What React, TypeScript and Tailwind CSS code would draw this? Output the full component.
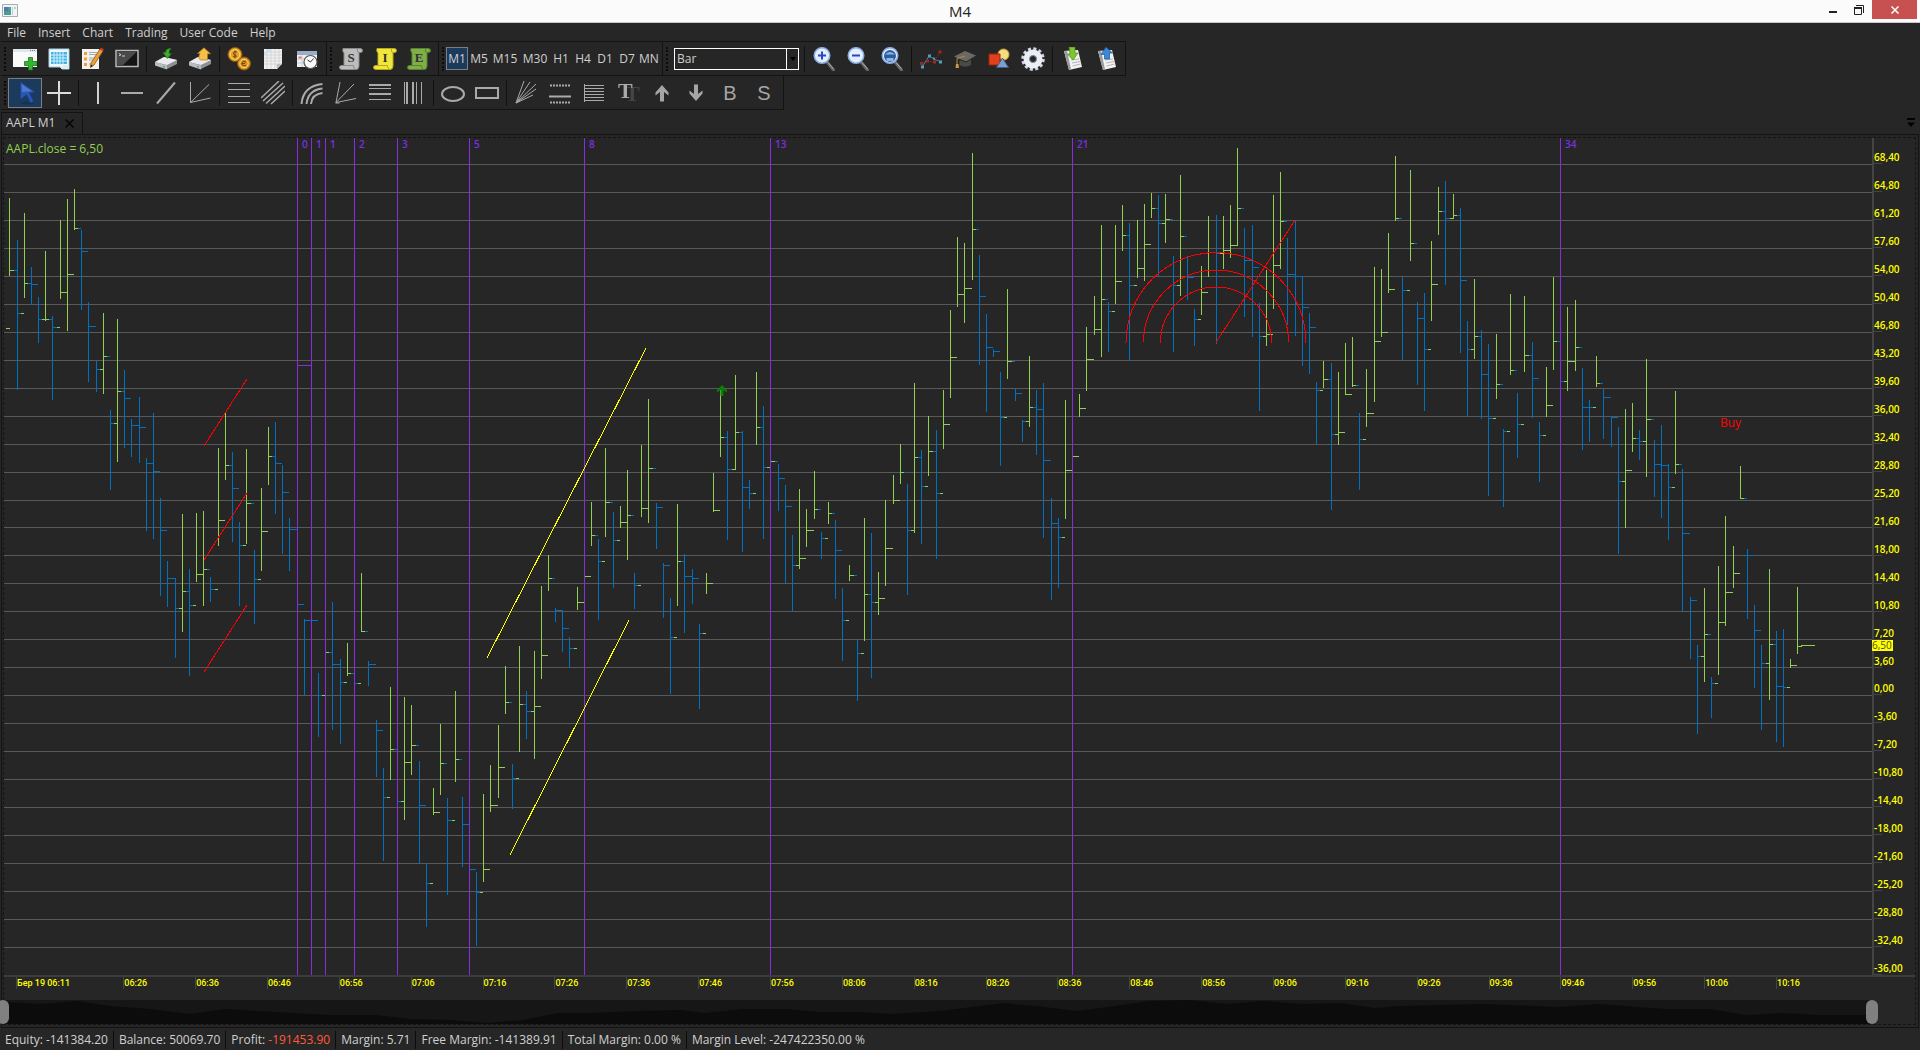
import { ReactNode, useState } from "react";

type Bar = [high: number, low: number, close: number, up: 0 | 1];

// high, low and close of every minute in chart units, 1 = closed up
const bars: Bar[] = [
  [198, 275, 270, 1], [240, 389, 313, 0], [213, 297, 283, 1], [267, 304, 284, 0], [297, 342, 319, 0],
  [251, 320, 319, 1], [316, 399, 327, 0], [220, 298, 292, 1], [199, 330, 274, 1], [189, 229, 228, 1],
  [230, 309, 251, 0], [302, 381, 326, 0], [361, 391, 369, 0], [313, 393, 356, 1], [410, 489, 423, 0],
  [319, 461, 391, 1], [370, 447, 398, 0], [419, 456, 425, 0], [397, 462, 427, 0], [458, 530, 463, 0],
  [413, 538, 471, 0], [498, 595, 530, 0], [561, 606, 578, 0], [578, 657, 608, 0], [514, 631, 591, 1],
  [569, 675, 605, 0], [513, 581, 574, 1], [511, 605, 569, 1], [577, 601, 589, 0], [448, 545, 520, 1],
  [413, 479, 465, 1], [452, 541, 488, 0], [522, 605, 545, 0], [449, 543, 503, 1], [550, 623, 579, 0],
  [488, 570, 531, 1], [427, 484, 456, 1], [422, 513, 463, 0], [465, 553, 492, 0], [518, 570, 529, 0],
  [529, 604, 604, 0], [619, 694, 620, 0], [620, 640, 620, 0], [673, 736, 695, 0], [652, 695, 652, 1],
  [602, 729, 664, 0], [659, 743, 682, 0], [643, 675, 673, 1], [673, 683, 683, 0], [573, 631, 631, 1],
  [661, 685, 664, 0], [720, 776, 730, 0], [768, 860, 797, 0], [687, 779, 749, 1], [749, 801, 801, 0],
  [697, 819, 762, 1], [705, 774, 745, 1], [761, 863, 805, 0], [863, 926, 883, 0], [788, 814, 812, 1],
  [724, 794, 763, 1], [798, 894, 820, 0], [691, 781, 759, 1], [797, 866, 824, 0], [824, 869, 869, 0],
  [872, 945, 892, 0], [794, 881, 869, 1], [765, 811, 805, 1], [725, 797, 767, 1], [666, 713, 702, 1],
  [764, 808, 778, 0], [646, 751, 704, 1], [691, 738, 711, 0], [651, 758, 706, 1], [586, 678, 655, 1],
  [555, 590, 578, 1], [608, 621, 610, 0], [610, 651, 628, 0], [637, 666, 648, 0], [587, 609, 602, 1],
  [576, 602, 576, 1], [502, 545, 535, 1], [539, 619, 561, 0], [448, 536, 502, 1], [512, 587, 540, 0],
  [506, 527, 522, 1], [470, 559, 515, 1], [573, 608, 585, 0], [445, 516, 508, 1], [399, 522, 468, 1],
  [503, 548, 507, 0], [563, 617, 565, 0], [598, 693, 637, 0], [504, 605, 561, 1], [554, 632, 576, 0],
  [569, 603, 578, 0], [624, 708, 633, 0], [573, 593, 583, 1], [473, 511, 510, 1], [390, 456, 437, 1],
  [431, 539, 469, 0], [375, 469, 432, 1], [431, 551, 487, 0], [480, 508, 493, 0], [372, 444, 427, 1],
  [406, 538, 467, 0], [461, 467, 461, 1], [464, 510, 478, 0], [485, 582, 506, 0], [535, 610, 565, 0],
  [489, 568, 558, 1], [509, 546, 530, 1], [471, 518, 509, 1], [532, 558, 538, 0], [502, 523, 513, 1],
  [520, 598, 550, 0], [588, 660, 620, 0], [565, 580, 575, 1], [639, 700, 653, 0], [518, 640, 594, 1],
  [533, 677, 602, 0], [572, 614, 598, 1], [500, 585, 548, 1], [475, 503, 500, 1], [444, 483, 472, 1],
  [484, 594, 530, 0], [383, 532, 457, 1], [450, 543, 486, 0], [416, 475, 451, 1], [430, 558, 493, 0],
  [390, 448, 424, 1], [310, 397, 357, 1], [237, 306, 294, 1], [243, 322, 288, 1], [153, 279, 229, 1],
  [255, 364, 296, 0], [314, 411, 347, 0], [349, 356, 351, 0], [372, 465, 417, 0], [289, 378, 361, 1],
  [388, 400, 393, 0], [420, 441, 421, 0], [356, 426, 407, 1], [390, 454, 409, 0], [383, 537, 460, 0],
  [498, 599, 523, 0], [518, 587, 537, 0], [400, 518, 470, 1], [456, 470, 456, 1], [394, 416, 408, 1],
  [327, 390, 359, 1], [296, 334, 329, 1], [225, 356, 299, 1], [302, 351, 311, 0], [225, 303, 281, 1],
  [205, 250, 235, 1], [223, 359, 285, 0], [220, 277, 268, 1], [204, 280, 244, 1], [193, 217, 208, 1],
  [195, 276, 223, 0], [194, 242, 219, 1], [256, 351, 285, 0], [175, 295, 236, 1], [256, 299, 277, 0],
  [309, 345, 319, 0], [266, 314, 292, 1], [216, 276, 252, 1], [215, 343, 253, 0], [216, 268, 250, 1],
  [205, 257, 245, 1], [148, 245, 208, 1], [228, 316, 260, 0], [225, 336, 267, 0], [303, 410, 336, 0],
  [270, 345, 334, 1], [195, 308, 265, 1], [172, 268, 221, 1], [238, 324, 274, 0], [221, 335, 276, 0],
  [276, 365, 307, 0], [313, 373, 327, 0], [382, 443, 390, 0], [361, 387, 379, 1], [363, 509, 434, 0],
  [372, 444, 432, 1], [343, 394, 394, 1], [337, 386, 385, 1], [413, 489, 439, 0], [369, 426, 413, 1],
  [267, 401, 341, 1], [269, 336, 332, 1], [233, 292, 289, 1], [156, 220, 218, 1], [277, 359, 290, 0],
  [170, 260, 243, 1], [302, 384, 318, 0], [293, 410, 349, 0], [241, 320, 284, 1], [187, 234, 211, 1],
  [181, 284, 218, 0], [194, 218, 215, 1], [208, 352, 280, 0], [321, 416, 349, 0], [279, 358, 336, 1],
  [330, 418, 374, 0], [344, 495, 418, 0], [334, 398, 384, 1], [429, 506, 431, 0], [294, 374, 370, 1],
  [393, 457, 424, 0], [296, 371, 355, 1], [342, 417, 378, 0], [422, 481, 435, 0], [367, 416, 405, 1],
  [277, 369, 341, 1], [341, 381, 381, 0], [307, 390, 361, 1], [300, 370, 347, 1], [368, 449, 407, 0],
  [400, 441, 407, 0], [356, 386, 383, 1], [389, 438, 397, 0], [416, 446, 417, 0], [427, 553, 481, 0],
  [409, 527, 470, 1], [403, 451, 438, 1], [430, 459, 441, 0], [359, 476, 419, 1], [440, 496, 464, 0],
  [425, 517, 465, 0], [464, 539, 487, 0], [391, 473, 464, 1], [469, 611, 533, 0], [597, 658, 600, 0],
  [645, 733, 656, 0], [588, 681, 634, 1], [677, 717, 683, 0], [566, 674, 622, 1], [516, 625, 592, 1],
  [546, 587, 573, 1], [466, 498, 498, 1], [549, 618, 555, 0], [605, 687, 630, 0], [645, 729, 663, 0],
  [569, 699, 644, 1], [631, 741, 686, 0], [629, 746, 687, 0], [659, 667, 665, 1], [587, 653, 646, 1],
];

const barX = (i: number) => Math.floor(9.9 + 7.18 * i);

const fibLines = [
  { x: 297, label: "0" },
  { x: 311, label: "1" },
  { x: 325, label: "1" },
  { x: 354, label: "2" },
  { x: 397, label: "3" },
  { x: 469, label: "5" },
  { x: 584, label: "8" },
  { x: 770, label: "13" },
  { x: 1072, label: "21" },
  { x: 1560, label: "34" },
];

const prices = Array.from({ length: 30 }, (_, i) =>
  (68.4 - i * 3.6).toFixed(2).replace("-0.00", "0.00").replace(".", ",")
);

const times = [
  { text: "Бер 19 06:11", span: 15 },
  ...Array.from({ length: 24 }, (_, i) => {
    const min = 386 + i * 10;
    const hh = String(Math.floor(min / 60)).padStart(2, "0");
    const mm = String(min % 60).padStart(2, "0");
    return { text: `${hh}:${mm}`, span: i === 23 ? 13.4 : 10 };
  }),
];

const overview =
  "0,2 36,4 73,1 106,6 146,9 186,14 221,9 256,11 326,15 371,15 406,19 446,20 483,23 519,20 554,13 586,13 636,11 676,10 701,13 739,9 783,9 816,12 856,12 886,14 936,11 1000,3 1040,7 1074,11 1110,6 1146,1 1186,0 1223,4 1259,1 1299,4 1336,3 1371,8 1396,6 1480,4 1556,7 1594,4 1661,9 1706,9 1743,15 1779,13 1816,15 1868,15";

const Icon = ({ children }: { children: ReactNode }) => (
  <svg viewBox="0 0 24 24" className="h-6 w-6" aria-hidden="true">
    {children}
  </svg>
);

const Scroll = ({ fill, edge, letter }: { fill: string; edge: string; letter: string }) => (
  <Icon>
    <path d="M4 1.500h17q2.500 0 2.500 2t-2 2H20V19q0 3.500-3 3.500H3q-2.500 0-2.500-2t2-2H5V6Q3 4 4 1.500z" fill={fill} stroke={edge} strokeWidth="1" />
    <path d="M18.500 2v2q0 1.500 1.500 1.500M3 18.500h11.500q0 3 2 4" fill="none" stroke={edge} strokeWidth="1" />
    <text x="12" y="15" textAnchor="middle" className="font-['Liberation_Serif'] text-[13px] font-bold" fill="#333333">
      {letter}
    </text>
  </Icon>
);

const Drive = ({ children }: { children: ReactNode }) => (
  <Icon>
    <path d="M1 15l9-5 13 3v4l-10 5-12-4z" fill="#8d9096" />
    <path d="M1 15l9-5 13 3-10 5z" fill="#e9ebee" />
    <path d="M1 15l12 3.500v4L1 18.500z" fill="#b9bcc2" />
    <path d="M9 19.500l2 .6" stroke="#4caf50" strokeWidth="1.500" />
    {children}
  </Icon>
);

const Lens = ({ children }: { children: ReactNode }) => (
  <Icon>
    <path d="M15.500 15.500l6 7.500" stroke="#666666" strokeWidth="3" strokeLinecap="round" />
    <path d="M16 15.500l5.500 6.500" stroke="#aaaaaa" strokeWidth="1" />
    <circle cx="10" cy="8.500" r="7.800" fill="#e3edfc" stroke="#86abe2" strokeWidth="1.500" />
    {children}
  </Icon>
);

const Note = ({ children }: { children: ReactNode }) => (
  <Icon>
    <path d="M4 4l14-1 4 17-13 3z" fill="#f2f2f2" />
    <path d="M4 4l3-.3 4 18.500-2 .8z" fill="#9a9a9a" />
    <path d="M11 13l8-1M12 16l8-1.500M12.500 19l8-2" stroke="#b5b5b5" strokeWidth="1" />
    {children}
  </Icon>
);

const Lines = ({ d, width = 1 }: { d: string; width?: number }) => (
  <Icon>
    <path d={d} fill="none" stroke="#aaaaaa" strokeWidth={width} />
  </Icon>
);

type Tool = { name: string; icon: ReactNode } | null;

const fileTools: Tool[] = [
  {
    name: "New chart",
    icon: (
      <Icon>
        <path d="M0 2h24v18H0z" fill="#fafafa" />
        <path d="M0 2h24v3H0z" fill="#dfe6ee" />
        <path d="M17 3.500h1M19 3.500h1M21 3.500h1" stroke="#5b7fae" />
        <path d="M15.500 10.500h4v4h4.500v4h-4.500V23h-4v-4.500H11.500v-4h4z" fill="#35b535" stroke="#157a15" strokeWidth=".8" />
      </Icon>
    ),
  },
  {
    name: "Calendar",
    icon: (
      <Icon>
        <path d="M2 2h20v20h-7l-2-2H2z" fill="#f3f7fa" stroke="#9fd3ea" />
        <path d="M4 5h16v12H4z" fill="#3cb4e7" />
        <path d="M4 8h16M4 11h16M4 14h16M7 5v12M10 5v12M13 5v12M16 5v12" stroke="#d5f0fb" />
        <path d="M14 22l1-3.500 7-.5v4z" fill="#dceef5" />
      </Icon>
    ),
  },
  {
    name: "Edit list",
    icon: (
      <Icon>
        <path d="M1 2h17v20H1z" fill="#f4f2ee" />
        <path d="M3 5h3v3H3zM3 10.500h3v3H3zM3 16h3v3H3z" fill="#f39a3d" />
        <path d="M8 5.500h8M8 7.500h8M8 11h7M8 13h5M8 17h6" stroke="#a9a9a9" />
        <path d="M19 2l3 2-9 14-3.500 2.500.5-4.500z" fill="#e9a13b" stroke="#8c5a16" strokeWidth=".8" />
        <path d="M19 2l1-1.500 3 2L22 4z" fill="#c33" />
        <path d="M9.500 20.500l.4-3 2 1.500z" fill="#222" />
      </Icon>
    ),
  },
  {
    name: "Terminal",
    icon: (
      <Icon>
        <path d="M1 3.500h22v16H1z" fill="#151515" stroke="#b9b9b9" strokeWidth="1.500" />
        <path d="M2 4.500h20L8 18H2z" fill="#4a4a4a" />
        <path d="M4 6.500l2 1.200-2 1.200M7 9h3" stroke="#eee" fill="none" strokeWidth=".8" />
      </Icon>
    ),
  },
  null,
  {
    name: "Import data",
    icon: (
      <Drive>
        <path d="M17 1.500Q12 1 11.500 5.500H9l4.500 6 4-5H15Q15 3 17 1.500z" fill="#3fae29" stroke="#1f7a12" strokeWidth=".6" />
      </Drive>
    ),
  },
  {
    name: "Export data",
    icon: (
      <Drive>
        <path d="M16 .8l6.500 6h-3V13h-7q-2-1-1.500-4l1-2.500h-2.500z" fill="#f6bf4b" stroke="#b97a15" strokeWidth=".7" />
      </Drive>
    ),
  },
  null,
  {
    name: "Account",
    icon: (
      <Icon>
        <circle cx="8" cy="7.500" r="7" fill="#e2a028" stroke="#8d560c" />
        <circle cx="8" cy="7.500" r="4.800" fill="none" stroke="#fbdc7c" />
        <path d="M10 5Q7 3.500 6.500 5.800T9.500 9Q9 11 6 9.500M8 3.500v8" fill="none" stroke="#7a4708" />
        <circle cx="17" cy="16.500" r="6.500" fill="#d8921f" stroke="#8d560c" />
        <circle cx="17" cy="16.500" r="4.200" fill="none" stroke="#fbdc7c" />
        <path d="M19 15q-3-2-4 1t4 2.500M15 16.500h3" fill="none" stroke="#7a4708" />
      </Icon>
    ),
  },
  {
    name: "Report",
    icon: (
      <Icon>
        <path d="M3 2h18v15l-5 5H3z" fill="#f1f1f1" />
        <path d="M3 5h18M3 8h18M3 11h18M3 14h18M3 17h14M6 2v20M10 2v20M14 2v20M18 2v15" stroke="#cfd0d2" strokeWidth=".8" />
        <path d="M21 16l-5 6-.5-4.500z" fill="#bdbdbd" />
        <path d="M6 2h4v3H6zM3 5h3v3H3z" fill="#cfe0f5" />
      </Icon>
    ),
  },
  {
    name: "Schedule",
    icon: (
      <Icon>
        <path d="M2 4h20v16H2z" fill="#eef0f3" />
        <path d="M2 4h20v4H2z" fill="#9badc9" />
        <path d="M2 12h20M2 16h20M7 8v12M12 8v12M17 8v12" stroke="#c8ccd4" />
        <path d="M3.500 9.500h3v2h-3z" fill="#e57373" />
        <circle cx="15.500" cy="15" r="6.500" fill="#fafafa" stroke="#555555" strokeWidth="1.200" />
        <path d="M15.500 15l3-3.500M15.500 15l-3-2" stroke="#333" fill="none" />
      </Icon>
    ),
  },
];

const scriptTools: Tool[] = [
  { name: "Scripts", icon: <Scroll fill="#bdbdbd" edge="#8a8a8a" letter="S" /> },
  { name: "Indicators", icon: <Scroll fill="#f0e63c" edge="#b5a91c" letter="I" /> },
  { name: "Experts", icon: <Scroll fill="#7fae4a" edge="#55842a" letter="E" /> },
];

const viewTools: Tool[] = [
  null,
  {
    name: "Zoom in",
    icon: (
      <Lens>
        <path d="M10 4.500v8M6 8.500h8" stroke="#2449c4" strokeWidth="2" />
      </Lens>
    ),
  },
  {
    name: "Zoom out",
    icon: (
      <Lens>
        <path d="M6 8.500h8" stroke="#2449c4" strokeWidth="2" />
      </Lens>
    ),
  },
  {
    name: "Zoom to fit",
    icon: (
      <Lens>
        <circle cx="10" cy="9" r="6" fill="#2c5d9c" />
        <path d="M5 7.500q5-5 10 0zM6.500 11h7v3h-7z" fill="#8fb6e4" />
      </Lens>
    ),
  },
  null,
  {
    name: "Lines",
    icon: (
      <Icon>
        <path d="M2 17l7-3 6 1 6-10" stroke="#8e2020" fill="none" strokeDasharray="2 1" />
        <path d="M3 20l7-11 5 3 7 3" stroke="#3d89a8" fill="none" />
        <path d="M2 18.500h3v3H2zM9 7.500h3v3H9zM20 13.500h3v3h-3zM14 10.500h2v2h-2z" fill="#4fa0c0" />
        <path d="M1 15h3v3H1zM7 12.500h3v3H7zM19.500 3.500h3v3h-3zM14 13.500h3v3h-3z" fill="#a02525" />
      </Icon>
    ),
  },
  {
    name: "Tutorial",
    icon: (
      <Icon>
        <path d="M1 9.500L12 4l11 4.500-10 6z" fill="#6a6a64" />
        <path d="M6.500 13v5q5.500 3.500 11.500 0v-5.500l-5 3z" fill="#4b4b46" />
        <path d="M12 9l-8 2.500V19" stroke="#b98a35" fill="none" />
        <path d="M3 17h2.500l.5 4H2.500z" fill="#c89a3f" />
      </Icon>
    ),
  },
  {
    name: "Objects",
    icon: (
      <Icon>
        <circle cx="16.500" cy="7.500" r="5.500" fill="#f5dc7d" stroke="#c4a33f" />
        <path d="M2 7h11v11H2z" fill="#e2401c" stroke="#9c2408" />
        <path d="M15.500 11l6 9.500h-12z" fill="#7f9fca" stroke="#405d8c" />
      </Icon>
    ),
  },
  {
    name: "Settings",
    icon: (
      <Icon>
        <circle cx="12" cy="12" r="10" fill="none" stroke="#d4d4e4" strokeWidth="3.500" strokeDasharray="3 2.236" />
        <circle cx="12" cy="12" r="6.500" fill="none" stroke="#eceef6" strokeWidth="6" />
        <circle cx="12" cy="12" r="3.500" fill="#262626" stroke="#8d93ad" />
      </Icon>
    ),
  },
  null,
  {
    name: "Save template",
    icon: (
      <Note>
        <path d="M9 0h6v6h3l-5 7-5.500-6H10z" fill="#7cc62f" stroke="#4b8a12" strokeWidth=".7" />
      </Note>
    ),
  },
  {
    name: "Load template",
    icon: (
      <Note>
        <path d="M12 0l6.500 6h-3v6h-5V7.500H7z" fill="#3b87d8" stroke="#1c559b" strokeWidth=".7" />
      </Note>
    ),
  },
];

const drawTools: Tool[] = [
  {
    name: "Select",
    icon: (
      <Icon>
        <ellipse cx="14" cy="22" rx="7" ry="1.200" fill="#16304d" />
        <path d="M7.500 1L22 11l-5.500 1 4 8.500-3 1.500-4-8.500-6 5z" fill="#2b57b5" stroke="#1e3f8c" strokeWidth=".8" />
        <path d="M8.500 3L19 10.300 9 11z" fill="#4f78c9" />
      </Icon>
    ),
  },
  {
    name: "Crosshair",
    icon: (
      <Icon>
        <path d="M12 0v24M0 12h24" stroke="#dcdcdc" strokeWidth="2" />
      </Icon>
    ),
  },
  null,
  {
    name: "Vertical line",
    icon: (
      <Icon>
        <path d="M12 1v22" stroke="#d0d0d0" strokeWidth="2" />
      </Icon>
    ),
  },
  { name: "Horizontal line", icon: <Lines d="M1 12h22" width={2} /> },
  { name: "Trend line", icon: <Lines d="M3 22.500L21 1.500" width={2} /> },
  { name: "Angle", icon: <Lines d="M2.500 1v20.500L21 3.500M2.500 21.500L22.500 17" /> },
  null,
  { name: "Fibonacci retracement", icon: <Lines d="M1 2.500h22M1 8.500h22M1 15.500h22M1 21.500h22" /> },
  {
    name: "Fibonacci channel",
    icon: (
      <Icon>
        <path d="M0 17L18 0M2 20L22 2M5 22.500L24 5M10 23L24 10" stroke="#aaaaaa" strokeWidth="1.500" />
      </Icon>
    ),
  },
  null,
  {
    name: "Fibonacci arcs",
    icon: <Lines d="M1.500 23Q3 5 22.500 3M6.500 23Q8 9 22.500 7.500M11 23Q12 13 22.500 12" width={2} />,
  },
  { name: "Fibonacci fan", icon: <Lines d="M6 1L2 21.500 20 3M2 21.500L22 17.500M1.500 22h4" /> },
  {
    name: "Fibonacci levels",
    icon: (
      <Icon>
        <path d="M1 4h22M1 13h22" stroke="#aaaaaa" strokeWidth="2" />
        <path d="M1 7.500h22M1 18.500h22" stroke="#aaaaaa" />
      </Icon>
    ),
  },
  {
    name: "Fibonacci time zones",
    icon: (
      <Icon>
        <path d="M5 1v22M11 1v22" stroke="#aaaaaa" strokeWidth="2" />
        <path d="M2.500 1v22M14.500 1v22M19.500 1v22" stroke="#aaaaaa" />
      </Icon>
    ),
  },
  null,
  {
    name: "Ellipse",
    icon: (
      <Icon>
        <ellipse cx="12" cy="13" rx="11" ry="7" fill="none" stroke="#aaaaaa" strokeWidth="2" />
      </Icon>
    ),
  },
  { name: "Rectangle", icon: <Lines d="M1 7h22v10H1z" width={2} /> },
  null,
  { name: "Gann fan", icon: <Lines d="M10 0L2 22 16 1M2 22L22 3M2 22L22 8M2 22L19 14" /> },
  {
    name: "Channel",
    icon: (
      <Icon>
        <path d="M2 4.500h20M2 21.500h20" stroke="#aaaaaa" strokeWidth="2" strokeDasharray="2 1" />
        <path d="M1 15.500h22" stroke="#aaaaaa" strokeWidth="2" />
      </Icon>
    ),
  },
  { name: "Grid", icon: <Lines d="M2.500 3v18M2 4.500h20M2 7.500h20M2 10.500h20M2 13.500h20M2 16.500h20M2 19.500h20" /> },
  {
    name: "Text label",
    icon: (
      <Icon>
        <text x="2" y="17" className="font-['Liberation_Serif'] text-[22px] font-bold drop-shadow-[7px_3px_0_#444444]" fill="#aaaaaa">
          T
        </text>
      </Icon>
    ),
  },
  {
    name: "Arrow up",
    icon: (
      <Icon>
        <path d="M12 4l6.500 7.500v3L14 11v9.500h-4V11l-4.500 3.500v-3z" fill="#a5a5a5" />
      </Icon>
    ),
  },
  {
    name: "Arrow down",
    icon: (
      <Icon>
        <path d="M12 20l6.500-7.500v-3L14 13V3.500h-4V13L5.500 9.500v3z" fill="#a5a5a5" />
      </Icon>
    ),
  },
  { name: "Buy label", icon: <span className="font-['Liberation_Sans'] text-xl text-[#a5a5a5]">B</span> },
  { name: "Sell label", icon: <span className="font-['Liberation_Sans'] text-xl text-[#a5a5a5]">S</span> },
];

const periods = ["M1", "M5", "M15", "M30", "H1", "H4", "D1", "D7", "MN"];

const status = [
  { label: "Equity:", value: "-141384.20" },
  { label: "Balance:", value: "50069.70" },
  { label: "Profit:", value: "-191453.90", loss: true },
  { label: "Margin:", value: "5.71" },
  { label: "Free Margin:", value: "-141389.91" },
  { label: "Total Margin:", value: "0.00 %" },
  { label: "Margin Level:", value: "-247422350.00 %" },
];

const Group = ({ children }: { children: ReactNode }) => (
  <div className="flex h-[35px] items-center border border-l-0 border-[#131313] pr-[2px]">
    <div className="mr-[2px] ml-[3px] h-[24px] border-l-2 border-dotted border-[#0c0c0c]" />
    {children}
  </div>
);

const ToolList = ({ tools, selected }: { tools: Tool[]; selected?: string }) => (
  <>
    {tools.map((tool, i) =>
      tool ? (
        <button
          key={tool.name}
          aria-label={tool.name}
          title={tool.name}
          className={`flex h-[30px] w-[34px] shrink-0 items-center justify-center ${
            tool.name === selected ? "bg-[#1b3a5c] outline -outline-offset-1 outline-[#7a7f85]" : ""
          }`}
        >
          {tool.icon}
        </button>
      ) : (
        <div key={i} className="mx-[2px] h-[26px] w-px shrink-0 bg-[#111111]" />
      )
    )}
  </>
);

const TitleBar = () => (
  <header className="grid h-[23px] shrink-0 grid-cols-3 border-b border-[#c9c9c9] bg-[#fbfbfb] text-[#222222]">
    <svg viewBox="0 0 16 14" className="mt-1 ml-0.5 h-[14px] w-4" aria-hidden="true">
      <path d="M.5.500h15v12H.5z" fill="#f1f4f4" stroke="#a3adb3" />
      <path d="M2 3h7v8H2z" fill="#4f9a94" />
      <path d="M2 3h4v4H2z" fill="#5479ad" />
      <path d="M10 3h1v8h-1zM12 3h2v2h-2z" fill="#b7d3cf" />
    </svg>
    <h1 className="text-center text-[15px] leading-[23px]">M4</h1>
    <div className="flex justify-end pr-[3px]">
      <button aria-label="Minimize" className="flex h-[19px] w-[26px] items-center justify-center">
        <span className="mt-[5px] h-[2px] w-2 bg-[#222222]" />
      </button>
      <button aria-label="Restore" className="flex h-[19px] w-[26px] items-center justify-center">
        <svg viewBox="0 0 10 10" className="h-[10px] w-[10px]" aria-hidden="true">
          <path d="M2 .5h7.500V8M.5 3h7v6.500h-7z" fill="none" stroke="#222222" />
          <path d="M0 2h8v2H0z" fill="#222222" />
        </svg>
      </button>
      <button aria-label="Close" className="flex h-[19px] w-[45px] items-center justify-center bg-[#c75050]">
        <svg viewBox="0 0 8 8" className="h-2 w-2" aria-hidden="true">
          <path d="M.5.500l7 7M7.500.500l-7 7" stroke="#ffffff" strokeWidth="1.500" />
        </svg>
      </button>
    </div>
  </header>
);

const Chart = () => (
  <svg
    viewBox="4 138 1868 837"
    preserveAspectRatio="none"
    className="h-full min-w-0 flex-1"
    role="img"
    aria-label="AAPL M1 bar chart"
    fill="none"
  >
    <g shapeRendering="crispEdges">
      {prices.slice(0, -1).map((price, i) => (
        <path key={price} d={`M3 ${Math.round(164 + i * 27.96) + 0.5}H1872`} stroke="#595959" />
      ))}
      <path d="M6 328.500h4" stroke="#92d050" />
      {bars.map(([high, low, close, up], i) => {
        const x = barX(i);
        const open = i > 0 ? `M${x - 3} ${bars[i - 1][2] + 0.5}h3` : "";
        return (
          <path
            key={i}
            d={`M${x + 0.5} ${high}V${low + 1}M${x} ${close + 0.5}h5${open}`}
            stroke={up ? "#92d050" : "#0070c0"}
          />
        );
      })}
      <path d="M1801 645.500h14" stroke="#92d050" />
      {fibLines.map(({ x }) => (
        <path key={x} d={`M${x + 0.5} 138V975`} stroke="#8a2be2" />
      ))}
      <path d="M297 365.500h15" stroke="#8a2be2" />
      <path d="M204 446L247 379M204 560L247 493M204 672L247 605" stroke="#ff0000" />
      <path d="M1126 342.500a90 90 0 0 1 180 0M1143.500 342.500a72.500 72.500 0 0 1 145 0M1160.500 342.500a55.500 55.500 0 0 1 111 0M1216 342.500L1295 220" stroke="#ff0000" />
      <path d="M487 658L646 348M510 855L629 620" stroke="#ffff00" />
    </g>
    <path d="M722 385l5 5v2.500l-3.500-2.500v6h-3v-6l-3.500 2.500V390z" fill="#0b7d0b" />
    <g fill="#7a2fe0" className="text-[10px] font-semibold">
      {fibLines.map(({ x, label }) => (
        <text key={x} x={x + 5} y="148">
          {label}
        </text>
      ))}
    </g>
    <text x="1720" y="427" fill="#ff0000" className="text-xs font-medium">
      Buy
    </text>
    <text x="6" y="153" fill="#92d050" className="text-xs">
      AAPL.close = 6,50
    </text>
  </svg>
);

const PriceAxis = () => (
  <div className="relative flex w-[43px] shrink-0 flex-col border-l-2 border-[#444444] text-[10px] font-semibold text-[#ffff00]">
    {prices.map((price) => (
      <div key={price} className="relative flex min-h-0 flex-1 items-end pb-px leading-[12px] first:grow-[0.93]">
        <span className="absolute bottom-0 left-0 h-px w-2 bg-[#444444]" />
        <span className="relative">{price}</span>
      </div>
    ))}
    <div className="absolute top-[60%] -left-[2px] bg-[#ffff00] pr-px leading-[11px] font-normal text-[#4a4a30]">6,50</div>
  </div>
);

const TimeAxis = () => (
  <div className="flex h-[25px] shrink-0 border-t-2 border-[#3c3c3c] pr-[43px] pl-[12px] font-['Roboto','Open_Sans',sans-serif] text-[9px] font-medium text-[#ffff00]">
    {times.map(({ text, span }) => (
      <div key={text} className="h-[12px] min-w-0 basis-0 border-l border-[#444444] leading-[12px] whitespace-nowrap" style={{ flexGrow: span }}>
        {text}
      </div>
    ))}
  </div>
);

const thumb =
  "pointer-events-none absolute -left-[7px] top-0 h-6 w-[calc(100%-30px)] appearance-none bg-transparent [&::-webkit-slider-thumb]:pointer-events-auto [&::-webkit-slider-thumb]:h-6 [&::-webkit-slider-thumb]:w-3 [&::-webkit-slider-thumb]:appearance-none [&::-webkit-slider-thumb]:rounded-md [&::-webkit-slider-thumb]:bg-[#808080]";

const RangeBar = () => {
  const [from, setFrom] = useState(0);
  const [to, setTo] = useState(100);

  return (
    <div className="relative h-6 shrink-0 pr-[43px]">
      <svg viewBox="0 0 1868 24" preserveAspectRatio="none" className="h-6 w-full bg-[#161616]" aria-hidden="true">
        <polygon points={`0,24 ${overview} 1868,24`} fill="#0c0c0c" />
      </svg>
      <input
        type="range"
        aria-label="Range start"
        className={thumb}
        value={from}
        onChange={(e) => setFrom(Math.min(Number(e.target.value), to))}
      />
      <input
        type="range"
        aria-label="Range end"
        className={thumb}
        value={to}
        onChange={(e) => setTo(Math.max(Number(e.target.value), from))}
      />
    </div>
  );
};

const App = () => {
  const [period, setPeriod] = useState("M1");

  return (
    <div className="flex h-screen flex-col overflow-hidden bg-[#262626] font-['Open_Sans','Noto_Sans',sans-serif] text-xs text-[#d0d0d0]">
      <TitleBar />
      <nav className="flex h-[18px] shrink-0 items-center gap-3 pt-[2px] pl-[7px]">
        {["File", "Insert", "Chart", "Trading", "User Code", "Help"].map((item) => (
          <button key={item}>{item}</button>
        ))}
      </nav>

      <div className="flex shrink-0 pl-px">
        <Group>
          <ToolList tools={fileTools} />
        </Group>
        <Group>
          <ToolList tools={scriptTools} />
        </Group>
        <Group>
          {periods.map((p) => (
            <button
              key={p}
              onClick={() => setPeriod(p)}
              className={`h-[23px] text-center ${p.length > 2 ? "w-[30px]" : "w-[22px]"} ${
                p === period ? "bg-[#1b3a5c] outline -outline-offset-1 outline-[#7a7f85]" : ""
              }`}
            >
              {p}
            </button>
          ))}
        </Group>
        <Group>
          <div className="relative ml-1">
            <select
              aria-label="Chart type"
              className="block h-[22px] w-[125px] appearance-none border border-white bg-[#262626] pl-[2px] outline-none"
            >
              <option>Bar</option>
              <option>Candle</option>
              <option>Line</option>
            </select>
            <div className="pointer-events-none absolute top-0 right-0 flex h-[22px] w-[13px] items-center justify-center border border-white">
              <svg viewBox="0 0 6 4" className="h-1 w-1.5" aria-hidden="true">
                <path d="M0 0h6L3 4z" fill="#000000" />
              </svg>
            </div>
          </div>
          <div className="ml-[3px] flex items-center">
            <ToolList tools={viewTools} />
          </div>
        </Group>
      </div>
      <div className="-mt-px flex shrink-0 pl-px">
        <Group>
          <ToolList tools={drawTools} selected="Select" />
        </Group>
      </div>

      <div className="flex h-[24px] shrink-0 items-center justify-between pt-px pl-px">
        <div className="-mb-px flex h-full items-center gap-[10px] border border-b-0 border-[#131313] bg-[#262626] pr-2 pb-px pl-1">
          <span>AAPL M1</span>
          <button aria-label="Close tab">
            <svg viewBox="0 0 9 9" className="h-[9px] w-[9px]" aria-hidden="true">
              <path d="M.5.500l8 8M8.500.500l-8 8" stroke="#050505" strokeWidth="1.500" />
            </svg>
          </button>
        </div>
        <button aria-label="Tab list" className="mr-[5px]">
          <svg viewBox="0 0 8 9" className="h-[9px] w-2" aria-hidden="true">
            <path d="M0 0h8v2H0zM0 4.500h8L4 9z" fill="#000000" />
          </svg>
        </button>
      </div>

      <main className="mx-px flex min-h-0 flex-1 flex-col border border-[#131313] p-[2px] pl-px">
        <div className="flex min-h-0 flex-1 flex-col border border-dashed border-[#131313]">
          <div className="flex min-h-0 flex-1">
            <Chart />
            <PriceAxis />
          </div>
          <TimeAxis />
          <RangeBar />
        </div>
      </main>

      <footer className="flex h-[22px] shrink-0 items-center pt-px">
        {status.map(({ label, value, loss }, i) => (
          <div key={label} className={`px-[5px] leading-[18px] ${i < status.length - 1 ? "border-r border-[#0c0c0c]" : ""}`}>
            {label} <span className={loss ? "text-[#ff5a3c]" : ""}>{value}</span>
          </div>
        ))}
      </footer>
    </div>
  );
};

export default App;
